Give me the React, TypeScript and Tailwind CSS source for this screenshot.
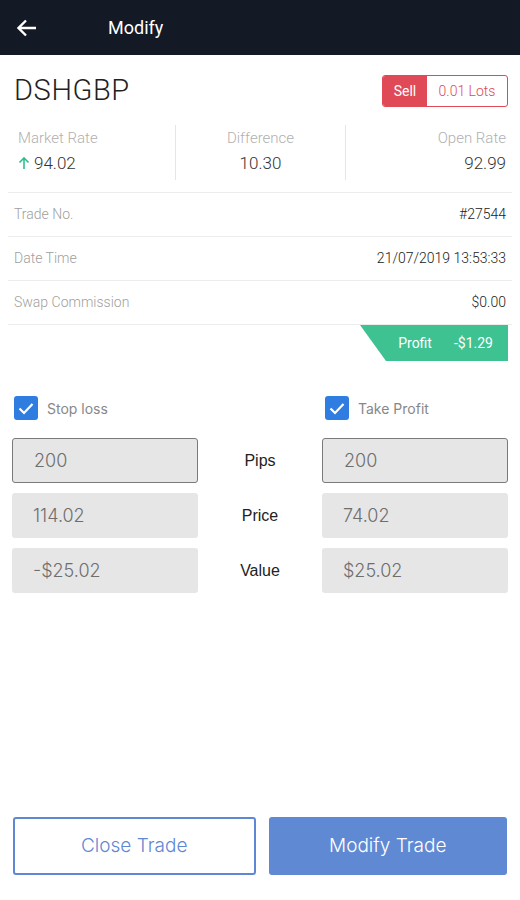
import React from "react";

const Stat = ({ label, value, align, arrow }: { label: string; value: string; align: string; arrow?: boolean }) => (
  <div className={`flex-1 flex flex-col ${align} gap-[5px]`}>
    <span className="text-[15px] font-light text-[#b0b0b0] leading-[18px]">{label}</span>
    <span className="text-[17px] font-light text-[#333] leading-[22px] flex items-center gap-[4px]">
      {arrow && (
        <svg width="12" height="14" viewBox="0 0 12 14" fill="none" stroke="#2fbf8a" strokeWidth="1.6">
          <path d="M6 13V2M1.5 6.5L6 2l4.5 4.5" />
        </svg>
      )}
      {value}
    </span>
  </div>
);

const InfoRow = ({ label, value }: { label: string; value: string }) => (
  <div className="h-[44px] flex items-center justify-between px-[6px] border-b border-[#ececec]">
    <span className="text-[14px] font-light text-[#a0a0a0]">{label}</span>
    <span className="text-[14px] font-light text-[#222]">{value}</span>
  </div>
);

const Check = ({ label }: { label: string }) => (
  <div className="flex items-center gap-[9px]">
    <div className="w-[24px] h-[24px] rounded-[3px] bg-[#2f7de1] flex items-center justify-center">
      <svg width="16" height="13" viewBox="0 0 16 13" fill="none" stroke="white" strokeWidth="2.2">
        <path d="M1.5 6.5l4.5 4.5L14.5 2" />
      </svg>
    </div>
    <span className="text-[14px] text-[#888]">{label}</span>
  </div>
);

const Field = ({ value, active }: { value: string; active?: boolean }) => (
  <div
    className={`h-[45px] w-[186px] rounded-[3px] bg-[#e6e6e6] flex items-center pl-[21px] text-[18px] font-light text-[#6e6e6e] ${
      active ? "border border-[#7a7a7a]" : ""
    }`}
  >
    {value}
  </div>
);

export default function App() {
  return (
    <div className="w-[520px] h-[900px] bg-white flex flex-col font-['Roboto',sans-serif]">
      {/* header */}
      <div className="h-[55px] bg-[#141926] flex items-center pl-[17px]">
        <svg width="20" height="18" viewBox="0 0 20 18" fill="none" stroke="white" strokeWidth="2.4">
          <path d="M19 9H2M9 1.5L1.5 9 9 16.5" />
        </svg>
        <span className="ml-[71px] text-white text-[18px]">Modify</span>
      </div>

      <div className="px-[8px]">
        {/* symbol */}
        <div className="flex items-start justify-between pt-[20px] pr-[4px] h-[70px]">
          <span className="pl-[6px] text-[29px] font-light text-[#222] tracking-[0.6px] leading-[32px] mt-[-1px]">DSHGBP</span>
          <div className="flex h-[32px] border border-[#e04a57] rounded-[3px] overflow-hidden">
            <span className="bg-[#e04a57] text-white text-[14px] w-[44px] justify-center flex items-center">Sell</span>
            <span className="text-[#e04a57] text-[14px] font-light w-[80px] justify-center flex items-center">0.01 Lots</span>
          </div>
        </div>

        {/* stats */}
        <div className="flex h-[68px] border-b border-[#ececec]">
          <div className="w-[168px] flex pt-[4px] border-r border-[#e6e6e6] mb-[12px] pl-[10px]">
            <Stat label="Market Rate" value="94.02" align="items-start" arrow />
          </div>
          <div className="w-[170px] flex pt-[4px] border-r border-[#e6e6e6] mb-[12px]">
            <Stat label="Difference" value="10.30" align="items-center" />
          </div>
          <div className="flex-1 flex pt-[4px] pr-[6px]">
            <Stat label="Open Rate" value="92.99" align="items-end" />
          </div>
        </div>

        <InfoRow label="Trade No." value="#27544" />
        <InfoRow label="Date Time" value="21/07/2019 13:53:33" />
        <InfoRow label="Swap Commission" value="$0.00" />

        <div className="flex justify-end pr-[4px]">
          <div className="h-[36px] w-[148px] bg-[#3ec291] flex items-center justify-end pr-[15px] gap-[22px] text-white text-[14px] [clip-path:polygon(0_0,100%_0,100%_100%,26px_100%)]">
            <span>Profit</span>
            <span>-$1.29</span>
          </div>
        </div>
      </div>

      {/* stop loss / take profit */}
      <div className="px-[12px] pt-[35px] font-['Inter',sans-serif]">
        <div className="flex mb-[18px] pl-[2px]">
          <div className="w-[311px]">
            <Check label="Stop loss" />
          </div>
          <Check label="Take Profit" />
        </div>
        <div className="flex flex-col gap-[10px]">
          {[
            ["200", "Pips", "200"],
            ["114.02", "Price", "74.02"],
            ["-$25.02", "Value", "$25.02"],
          ].map(([l, m, r], i) => (
            <div key={m} className="flex items-center justify-between">
              <Field value={l} active={i === 0} />
              <span className="text-[16px] text-[#222] flex-1 text-center font-['Liberation_Sans',sans-serif]">{m}</span>
              <Field value={r} active={i === 0} />
            </div>
          ))}
        </div>
      </div>

      <div className="flex-1" />

      {/* buttons */}
      <div className="flex gap-[13px] px-[13px] pb-[25px] font-['Inter',sans-serif]">
        <button className="flex-1 h-[58px] border-2 border-[#5f88d4] rounded-[3px] text-[#5f88d4] text-[19px] font-light bg-white">
          Close Trade
        </button>
        <button className="flex-1 h-[58px] bg-[#6089d4] rounded-[3px] text-white text-[19px] font-light">
          Modify Trade
        </button>
      </div>
    </div>
  );
}
